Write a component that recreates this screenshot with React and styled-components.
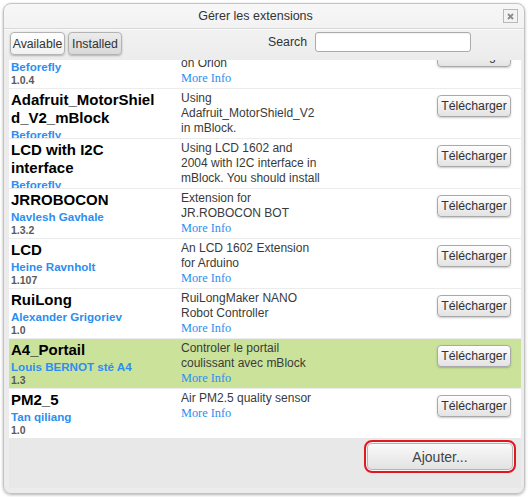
import React, { useLayoutEffect, useRef } from "react";
import styled, { createGlobalStyle } from "styled-components";

const GlobalStyle = createGlobalStyle`
  html, body { margin: 0; padding: 0; background: #ffffff; }
  body { font-family: "Liberation Sans", Arial, sans-serif; }
  * { box-sizing: border-box; }
`;

const LINK_BLUE = "#2b8ef0";

const Page = styled.div`
  width: 528px;
  height: 497px;
  padding: 3px;
`;

const Window = styled.div`
  width: 522px;
  height: 491px;
  border: 1px solid #c3c3c3;
  border-radius: 8px;
  background: linear-gradient(#f7f7f7, #ececec 56px, #ececec);
  box-shadow: 0 1px 3px rgba(0, 0, 0, 0.3);
  display: flex;
  flex-direction: column;
  overflow: hidden;
`;

const TitleBar = styled.div`
  height: 25px;
  display: flex;
  align-items: center;
  padding: 0 6px 0 4px;
  border-bottom: 1px solid #d8d8d8;
  box-shadow: 0 1px 0 #fafafa;
`;

const Title = styled.div`
  flex: 1;
  text-align: center;
  font-size: 12.5px;
  color: #333;
`;

const CloseBox = styled.button`
  width: 15px;
  height: 14px;
  padding: 0;
  border: 1px solid #b9b9b9;
  background: #f3f3f3;
  display: flex;
  align-items: center;
  justify-content: center;
`;

const Toolbar = styled.div`
  height: 31px;
  display: flex;
  align-items: flex-start;
  padding: 3px 53px 0 6px;
`;

const Tabs = styled.div`
  display: flex;
  gap: 3px;
`;

const Tab = styled.button`
  width: ${(p) => p.$w}px;
  height: 23px;
  padding: 0;
  border: 1px solid #b3b3b3;
  border-radius: 4px;
  font-family: "Liberation Sans", Arial, sans-serif;
  font-size: 12.3px;
  color: #333;
  background: ${(p) =>
    p.$active
      ? "linear-gradient(#ffffff, #f1f1f1)"
      : "linear-gradient(#ececec, #d9d9d9)"};
  box-shadow: 0 1px 2px rgba(0, 0, 0, 0.25);
`;

const SearchGroup = styled.label`
  margin-left: auto;
  display: flex;
  align-items: center;
  gap: 8px;
  font-size: 12.3px;
  color: #333;
`;

const SearchInput = styled.input`
  width: 156px;
  height: 20px;
  border: 1px solid #ababab;
  border-radius: 3px;
  background: #fff;
  box-shadow: inset 0 1px 1px rgba(0, 0, 0, 0.06);
`;

const Panel = styled.div`
  flex: 1;
  margin: 0 3px 5px 5px;
  background: #e8e8e9;
  display: flex;
  flex-direction: column;
`;

const List = styled.div`
  height: 378px;
  background: #fff;
  overflow: hidden;
`;

const Row = styled.div`
  height: 50px;
  display: grid;
  grid-template-columns: 148px 146px 1fr 74px;
  column-gap: 22px;
  padding: 0 10px 0 2px;
  background: ${(p) => (p.$selected ? "#cbe29b" : "#ffffff")};
  border-bottom: 1px solid #ececec;
  overflow: hidden;
`;

const NameCell = styled.div`
  padding-top: 2px;
  min-width: 0;
  overflow: hidden;
`;

const Name = styled.div`
  font-size: 15px;
  font-weight: bold;
  line-height: 18px;
  color: #000;
  overflow-wrap: anywhere;
`;

const Author = styled.div`
  font-size: 11.6px;
  font-weight: bold;
  line-height: 15px;
  color: ${LINK_BLUE};
`;

const Version = styled.div`
  font-size: 10.5px;
  font-weight: bold;
  line-height: 13px;
  color: #5a5a5a;
`;

const DescCell = styled.div`
  padding-top: 2px;
  overflow: hidden;
`;

const Desc = styled.div`
  font-size: 12px;
  line-height: 15px;
  color: #3a3a3a;
  white-space: pre-line;
`;

const MoreInfo = styled.a`
  display: block;
  font-family: "Liberation Serif", "Times New Roman", serif;
  font-size: 12.3px;
  line-height: 15px;
  color: ${LINK_BLUE};
  text-decoration: none;
`;

const DownloadButton = styled.button`
  grid-column: 4;
  margin-top: 6px;
  width: 74px;
  height: 22px;
  padding: 0;
  border: 1px solid #a9a9a9;
  border-radius: 4px;
  background: linear-gradient(#fefefe, #e3e3e3);
  box-shadow: 0 1px 2px rgba(0, 0, 0, 0.22);
  font-family: "Liberation Sans", Arial, sans-serif;
  font-size: 12.3px;
  color: #333;
`;

const Footer = styled.div`
  flex: 1;
  display: flex;
  justify-content: flex-end;
  align-items: flex-start;
  padding: 2px 5px 0 0;
`;

const AddButton = styled.button`
  width: 152px;
  height: 33px;
  border: 2px solid #e3161f;
  border-radius: 8px;
  background: linear-gradient(#fbfbfb, #e1e1e1);
  box-shadow: inset 0 0 0 1px #f6f6f6, inset 0 0 0 2px #b4b4b4;
  font-family: "Liberation Sans", Arial, sans-serif;
  font-size: 14px;
  color: #444;
`;

const extensions = [
  {
    name: "MeOrion",
    author: "Beforefly",
    version: "1.0.4",
    desc: "Makeblock sensor blocks\non Orion",
  },
  {
    name: "Adafruit_MotorShield_V2_mBlock",
    author: "Beforefly",
    version: "1.0",
    desc: "Using\nAdafruit_MotorShield_V2\nin mBlock.",
  },
  {
    name: "LCD with I2C interface",
    author: "Beforefly",
    version: "1.0",
    desc: "Using LCD 1602 and\n2004 with I2C interface in\nmBlock. You should install\nthe library first.",
  },
  {
    name: "JRROBOCON",
    author: "Navlesh Gavhale",
    version: "1.3.2",
    desc: "Extension for\nJR.ROBOCON BOT",
  },
  {
    name: "LCD",
    author: "Heine Ravnholt",
    version: "1.107",
    desc: "An LCD 1602 Extension\nfor Arduino",
  },
  {
    name: "RuiLong",
    author: "Alexander Grigoriev",
    version: "1.0",
    desc: "RuiLongMaker NANO\nRobot Controller",
  },
  {
    name: "A4_Portail",
    author: "Louis BERNOT sté A4",
    version: "1.3",
    desc: "Controler le portail\ncoulissant avec mBlock",
    selected: true,
  },
  {
    name: "PM2_5",
    author: "Tan qiliang",
    version: "1.0",
    desc: "Air PM2.5 quality sensor",
  },
];

function CloseIcon() {
  return (
    <svg width="7" height="7" viewBox="0 0 7 7">
      <path d="M1 1 L6 6 M6 1 L1 6" stroke="#8c8c8c" strokeWidth="1.8" />
    </svg>
  );
}

export default function App() {
  const listRef = useRef(null);

  // the list is shown already scrolled a little way down
  useLayoutEffect(() => {
    if (listRef.current) listRef.current.scrollTop = 21;
  }, []);

  return (
    <Page>
      <GlobalStyle />
      <Window>
        <TitleBar>
          <Title>Gérer les extensions</Title>
          <CloseBox aria-label="close">
            <CloseIcon />
          </CloseBox>
        </TitleBar>
        <Toolbar>
          <Tabs>
            <Tab $w={55} $active>
              Available
            </Tab>
            <Tab $w={54}>Installed</Tab>
          </Tabs>
          <SearchGroup>
            Search
            <SearchInput type="text" />
          </SearchGroup>
        </Toolbar>
        <Panel>
          <List ref={listRef}>
            {extensions.map((ext) => (
              <Row key={ext.name} $selected={ext.selected}>
                <NameCell>
                  <Name>{ext.name}</Name>
                  <Author>{ext.author}</Author>
                  <Version>{ext.version}</Version>
                </NameCell>
                <DescCell>
                  <Desc>{ext.desc}</Desc>
                  <MoreInfo href="#">More Info</MoreInfo>
                </DescCell>
                <DownloadButton>Télécharger</DownloadButton>
              </Row>
            ))}
          </List>
          <Footer>
            <AddButton>Ajouter...</AddButton>
          </Footer>
        </Panel>
      </Window>
    </Page>
  );
}
